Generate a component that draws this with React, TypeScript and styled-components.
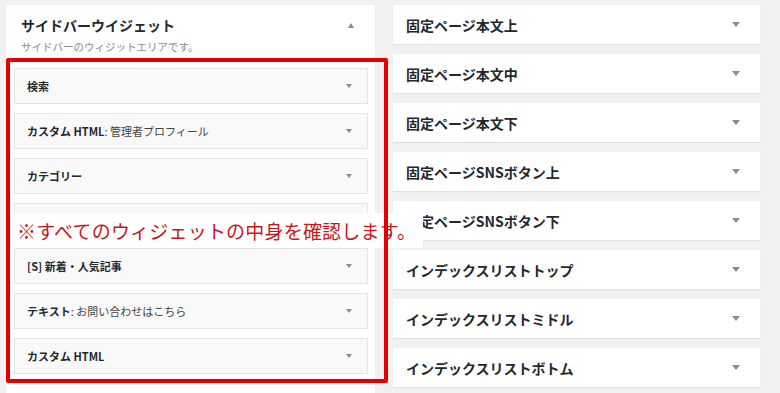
import styled, { createGlobalStyle } from 'styled-components';

type Widget = { title: string; sub?: string };

// 4番目は注釈の下に隠れているので見出しなし
const sidebarWidgets: Widget[] = [
  { title: '検索' },
  { title: 'カスタム HTML', sub: ': 管理者プロフィール' },
  { title: 'カテゴリー' },
  { title: '' },
  { title: '[S] 新着・人気記事' },
  { title: 'テキスト', sub: ': お問い合わせはこちら' },
  { title: 'カスタム HTML' },
];

const areas = [
  '固定ページ本文上',
  '固定ページ本文中',
  '固定ページ本文下',
  '固定ページSNSボタン上',
  '固定ページSNSボタン下',
  'インデックスリストトップ',
  'インデックスリストミドル',
  'インデックスリストボトム',
];

function App() {
  return (
    <>
      <GlobalStyle />
      <Page>
        {/* 左：サイドバー */}
        <SidebarPanel>
          <PanelHeader>
            <PanelTitle>サイドバーウイジェット</PanelTitle>
            <Arrow $up />
          </PanelHeader>
          <PanelDesc>サイドバーのウィジットエリアです。</PanelDesc>
          <WidgetList>
            {sidebarWidgets.map((w, i) => (
              <WidgetRow key={i}>
                <WidgetTitle>
                  {w.title}
                  {w.sub && <InTitle>{w.sub}</InTitle>}
                </WidgetTitle>
                <Arrow />
              </WidgetRow>
            ))}
          </WidgetList>
        </SidebarPanel>

        {/* 右：その他のエリア */}
        <AreaColumn>
          {areas.map((name) => (
            <AreaRow key={name}>
              <AreaTitle>{name}</AreaTitle>
              <Arrow $big />
            </AreaRow>
          ))}
        </AreaColumn>

        {/* 注釈 */}
        <Callout>※すべてのウィジェットの中身を確認します。</Callout>
        <Highlight />
      </Page>
    </>
  );
}

export default App;

const GlobalStyle = createGlobalStyle`
  html, body {
    margin: 0;
    padding: 0;
    background: #f1f1f1;
    font-family: "Noto Sans CJK JP", "Noto Sans", sans-serif;
    color: #23282d;
  }
`;

const Page = styled.div`
  position: relative;
  display: grid;
  grid-template-columns: 369px 367px;
  column-gap: 18px;
  align-items: start;
  padding: 5px 0 0 6px;
  height: 393px;
  box-sizing: border-box;
  overflow: hidden;
`;

const SidebarPanel = styled.div`
  background: #fff;
  height: 400px;
  box-shadow: 0 1px 1px rgba(0, 0, 0, 0.04);
`;

const PanelHeader = styled.div`
  display: flex;
  align-items: center;
  justify-content: space-between;
  padding: 11px 21px 0 15px;
`;

const PanelTitle = styled.h2`
  margin: 0;
  font-size: 14px;
  line-height: 18px;
  font-weight: 700;
  color: #23282d;
`;

const PanelDesc = styled.p`
  margin: 6px 0 0;
  padding: 0 15px;
  font-size: 10.5px;
  line-height: 14px;
  color: #8a8a8a;
`;

const WidgetList = styled.div`
  display: flex;
  flex-direction: column;
  gap: 9px;
  margin-top: 14px;
  padding: 0 7px 0 8px;
`;

const WidgetRow = styled.div`
  display: flex;
  align-items: center;
  justify-content: space-between;
  height: 36px;
  box-sizing: border-box;
  padding: 0 15px 0 12px;
  background: #f9f9f9;
  border: 1px solid #e5e5e5;
`;

const WidgetTitle = styled.span`
  font-size: 11px;
  font-weight: 700;
  color: #23282d;
`;

const InTitle = styled.span`
  font-weight: 400;
  color: #444;
`;

const AreaColumn = styled.div`
  display: flex;
  flex-direction: column;
  gap: 10px;
`;

const AreaRow = styled.div`
  display: flex;
  align-items: center;
  justify-content: space-between;
  height: 39px;
  box-sizing: border-box;
  padding: 0 20px 0 13px;
  background: #fff;
  box-shadow: 0 1px 1px rgba(0, 0, 0, 0.06);
`;

const AreaTitle = styled.span`
  font-size: 14px;
  font-weight: 700;
  color: #23282d;
`;

const Arrow = styled.span<{ $up?: boolean; $big?: boolean }>`
  width: 0;
  height: 0;
  border-left: ${(p) => (p.$big ? 4 : 3.5)}px solid transparent;
  border-right: ${(p) => (p.$big ? 4 : 3.5)}px solid transparent;
  ${(p) =>
    p.$up
      ? 'border-bottom: 5px solid #8c8c8c;'
      : `border-top: ${p.$big ? 5 : 4}px solid #8c8c8c;`}
`;

const Callout = styled.div`
  position: absolute;
  left: 7px;
  top: 213px;
  width: 416px;
  height: 35px;
  box-sizing: border-box;
  padding-left: 10px;
  display: flex;
  align-items: center;
  background: #fff;
  color: #c8161d;
  font-size: 19px;
  letter-spacing: 0.2px;
  font-weight: 400;
  white-space: nowrap;
  z-index: 1;
`;

const Highlight = styled.div`
  position: absolute;
  left: 6px;
  top: 58px;
  width: 382px;
  height: 325px;
  box-sizing: border-box;
  border: 4px solid #e40000;
  border-radius: 2px;
  z-index: 2;
  pointer-events: none;
`;
